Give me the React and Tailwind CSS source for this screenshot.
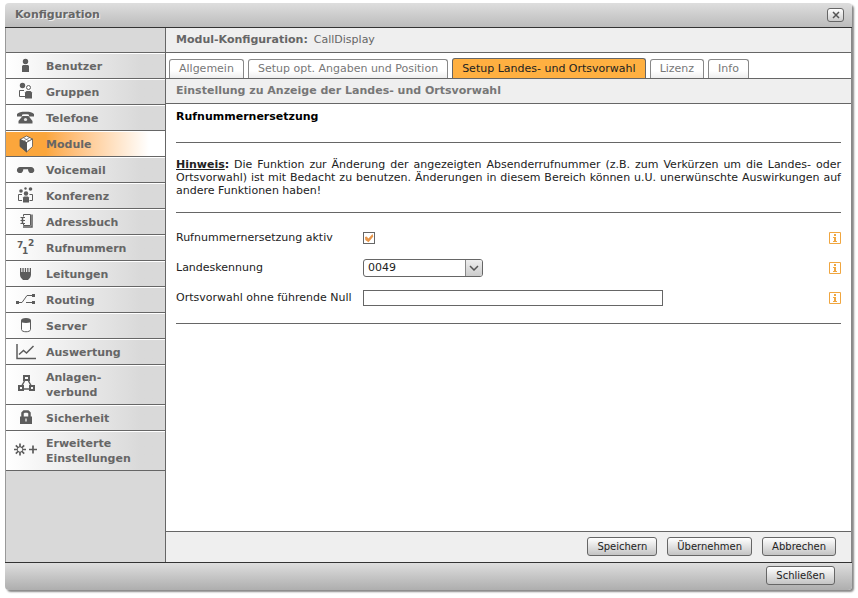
import React, { useState } from 'react';

const ICONS = {
  user: (
    <g fill="currentColor">
      <circle cx="13.5" cy="7.5" r="2.7" />
      <path d="M10 18v-6l1-1h5l1 1v6z" />
    </g>
  ),
  group: (
    <g fill="currentColor">
      <circle cx="10.5" cy="5.5" r="2.7" />
      <circle cx="16.5" cy="7.5" r="2" fill="#fff" stroke="currentColor" />
      <path d="M12 10.5H7.5v6H13" fill="#fff" stroke="currentColor" />
      <path d="M13 18.5v-6l1.500-1.500h4l1.500 1.500v6z" />
    </g>
  ),
  phone: (
    <g fill="currentColor">
      <path d="M5 10.500V8c1.500-1.700 4-2.300 8.500-2.300S20.500 6.300 22 8v2.500h-5V8.800c-2-.6-5-.6-7 0v1.700z" />
      <path d="M10.500 10h6l4 5v2.500h-14V15z" />
      <circle cx="13.500" cy="13.500" r="1.600" fill="#e6e6e6" />
    </g>
  ),
  cube: (
    <g stroke="#555" strokeWidth=".8" strokeLinejoin="round">
      <path d="M8 7.500l6.500-3.500L20.500 7l-6 3.500z" fill="#fff" />
      <path d="M14.500 10.500l6-3.500v7.500l-6 5.500z" fill="#fff" />
      <path d="M8 7.500l6.500 3V20L8 14.500z" fill="#555" />
      <path d="M11.500 5.800l5.500 3M17.500 5.800L11.500 9" strokeWidth=".6" />
    </g>
  ),
  voicemail: (
    <path
      fill="currentColor"
      d="M8 9h11c1.800 0 3.300 1.500 3.300 3.200 0 1.600-1.400 2.900-3.100 2.900-1.900 0-3.200-1.500-3.200-3.900h-4.700c0 2.400-1.300 3.900-3.300 3.900-1.700 0-3.100-1.300-3.100-2.900C4.900 10.500 6.300 9 8 9z"
    />
  ),
  conference: (
    <g fill="currentColor">
      <circle cx="9" cy="7" r="1.800" />
      <circle cx="14" cy="9.500" r="2.200" />
      <circle cx="18.500" cy="5" r="1.800" />
      <circle cx="13.500" cy="4.500" r="1.200" />
      <path d="M10 10.500H6.500v6H10M17.500 10.500h3v6h-3" fill="none" stroke="currentColor" />
      <path d="M11 18.500v-5l1-1h4l1 1v5z" />
    </g>
  ),
  book: (
    <g fill="none" stroke="currentColor">
      <path d="M11.500 6.500v-2h7v11h-7v-1.500" />
      <path d="M11 17h9V4.500" strokeWidth="1.500" />
      <path d="M8.500 7.500H13M8.500 13.500H13M8.500 10.500H13" />
      <path d="M10.500 7v7" strokeWidth="1.500" />
    </g>
  ),
  numbers: (
    <g fill="currentColor" fontFamily="DejaVu Sans" fontWeight="bold" fontSize="9">
      <text x="5" y="12">7</text>
      <text x="10" y="18">1</text>
      <text x="16" y="10">2</text>
    </g>
  ),
  plug: (
    <g fill="currentColor">
      <path d="M8 10h11v2.500c0 2.500-1.500 4-3 5.500h-5c-1.500-1.500-3-3-3-5.500z" />
      <path d="M8 6h1.300v4H8zM10.400 6h1.300v4h-1.300zM12.800 6h1.300v4h-1.300zM15.200 6h1.300v4h-1.300zM17.700 6H19v4h-1.300z" />
    </g>
  ),
  routing: (
    <g fill="currentColor">
      <path d="M6 14.500h4l5-7h6M14 14.500h7" fill="none" stroke="currentColor" />
      <path d="M4 13h3v3H4zM20 6h3v3h-3zM20 13h3v3h-3z" />
    </g>
  ),
  server: (
    <g>
      <path d="M9.500 6.500v9c0 3 9 3 9 0v-9" fill="#fff" stroke="currentColor" />
      <ellipse cx="14" cy="6.500" rx="5" ry="2.500" fill="currentColor" />
    </g>
  ),
  chart: (
    <g fill="none" stroke="currentColor">
      <path d="M5 4v14.500h19" strokeWidth="1.500" />
      <path d="M7 14.500l4.500-4 3 2.500L21.500 6" strokeWidth="1.500" />
    </g>
  ),
  network: (
    <g fill="none" stroke="currentColor" strokeWidth="2">
      <path d="M12 3h5v4h-5zM7 13h4v4H7zM18 13h4v4h-4z" />
      <path d="M12.500 8L10 12.500M16.500 8l2.500 4.500M11 16h7" strokeWidth="1.500" />
    </g>
  ),
  lock: (
    <g>
      <path d="M10.500 11V7l1.500-1.500h4L17.500 7v4" fill="none" stroke="currentColor" strokeWidth="2.500" />
      <path d="M8 10.500h12V18H8z" fill="currentColor" />
      <path d="M13.300 12.500h1.400v3h-1.400z" fill="#e6e6e6" />
    </g>
  ),
  gear: (
    <g fill="none" stroke="currentColor" strokeWidth="1.700">
      <path d="M8 4.500v3.700M8 12.800v3.700M2 10.500h3.700M10.300 10.500H14M3.800 6.300l2.700 2.700M9.500 12l2.700 2.700M12.200 6.300L9.500 9M6.500 12l-2.700 2.700" />
      <circle cx="8" cy="10.500" r="2.800" strokeWidth=".8" />
      <path d="M17 10.500h8M21 6.500v8" />
    </g>
  ),
};

const NAV_ITEMS = [
  { label: ['Benutzer'], icon: 'user' },
  { label: ['Gruppen'], icon: 'group' },
  { label: ['Telefone'], icon: 'phone' },
  { label: ['Module'], icon: 'cube', active: true },
  { label: ['Voicemail'], icon: 'voicemail' },
  { label: ['Konferenz'], icon: 'conference' },
  { label: ['Adressbuch'], icon: 'book' },
  { label: ['Rufnummern'], icon: 'numbers' },
  { label: ['Leitungen'], icon: 'plug' },
  { label: ['Routing'], icon: 'routing' },
  { label: ['Server'], icon: 'server' },
  { label: ['Auswertung'], icon: 'chart' },
  { label: ['Anlagen-', 'verbund'], icon: 'network' },
  { label: ['Sicherheit'], icon: 'lock' },
  { label: ['Erweiterte', 'Einstellungen'], icon: 'gear' },
];

const TABS = ['Allgemein', 'Setup opt. Angaben und Position', 'Setup Landes- und Ortsvorwahl', 'Lizenz', 'Info'];

const NavItem = ({ label, icon, active }) => (
  <li className="border-b border-[#666]">
    <a
      href="#"
      className={`flex items-center border-t border-white pl-[6px] ${
        label.length > 1 ? 'h-[39px]' : 'h-[25px]'
      } ${
        active
          ? 'bg-linear-to-r from-[#fba63c] from-25% to-white to-90%'
          : 'bg-linear-to-r from-white to-[#d9d9d9] to-85%'
      }`}
    >
      <svg viewBox="0 0 28 24" className="h-6 w-7 shrink-0 text-[#5c5c5c]" aria-hidden="true">
        {ICONS[icon]}
      </svg>
      <span className="pl-[6px] font-bold leading-[15px]">
        {label.map((line) => (
          <span key={line} className="block">{line}</span>
        ))}
      </span>
    </a>
  </li>
);

const Button = ({ children }) => (
  <button
    type="button"
    className="h-[19px] rounded-[3px] border border-[#666] bg-linear-to-b from-white to-[#c4c4c4] px-[9px] text-[10px] leading-[17px] text-[#222]"
  >
    {children}
  </button>
);

const InfoButton = ({ topic }) => (
  <button type="button" aria-label={`Info: ${topic}`} className="ml-auto size-3 text-[#f0a640]">
    <svg viewBox="0 0 12 12" className="size-3">
      <path d="M.5.5h11v11H.5z" fill="none" stroke="currentColor" />
      <path d="M5 2h2v2H5zM4 5h3v4h1v1H4V9h1V6H4z" fill="currentColor" />
    </svg>
  </button>
);

const Row = ({ id, label, children }) => (
  <div className="flex h-[30px] items-center pb-px">
    <label htmlFor={id} className="w-[187px] shrink-0 pt-px">{label}</label>
    {children}
    <InfoButton topic={label} />
  </div>
);

export default function App() {
  const [active, setActive] = useState(true);
  const [areaCode, setAreaCode] = useState('');

  return (
    <div className="flex min-h-screen bg-white pt-[3px] pr-[6px] pb-2 pl-[5px] font-['DejaVu_Sans',Verdana,sans-serif] text-[11px] text-[#666]">
      <div className="flex grow flex-col overflow-hidden rounded-[4px] shadow-[2px_2px_2px_#888]">
        <header className="flex h-[25px] shrink-0 items-center justify-between border-b border-[#333] bg-linear-to-b from-[#dedede] to-[#bcbcbc] pr-2 pl-[10px]">
          <h1 className="pt-px font-bold [text-shadow:1px_1px_0_#eee]">Konfiguration</h1>
          <button
            type="button"
            aria-label="Fenster schließen"
            className="flex h-[14px] w-[17px] items-center justify-center rounded-[3px] border border-[#666] bg-linear-to-b from-white to-[#ccc]"
          >
            <svg viewBox="0 0 8 8" className="size-2" stroke="#555" strokeWidth="1.5">
              <path d="M1 1l6 6M7 1L1 7" />
            </svg>
          </button>
        </header>

        <div className="flex grow">
          <nav className="w-[161px] shrink-0 border-r border-l border-r-[#666] border-l-[#999] bg-[#d9d9d9]">
            <div className="h-[25px] border-b border-[#666]"></div>
            <ul>
              {NAV_ITEMS.map((item) => (
                <NavItem key={item.icon} {...item} />
              ))}
            </ul>
          </nav>

          <main className="flex min-w-0 grow flex-col border-r border-[#888] bg-white">
            <div className="flex h-[25px] items-center gap-[6px] border-b border-[#666] bg-[#efefef] px-[10px]">
              <strong>Modul-Konfiguration:</strong>
              <span>CallDisplay</span>
            </div>

            <div className="flex h-[26px] items-end gap-1 border-b border-[#666] pl-[3px]">
              {TABS.map((tab, i) => (
                <button
                  key={tab}
                  type="button"
                  className={`rounded-t-[3px] border border-b-0 px-[9px] pt-px ${
                    i === 2
                      ? 'h-5 border-[#666] bg-[#ffb041] text-[#222]'
                      : 'h-[19px] border-[#888] bg-linear-to-b from-white from-60% to-[#eee] text-[#777]'
                  }`}
                >
                  {tab}
                </button>
              ))}
            </div>

            <h2 className="h-[25px] border-b border-[#666] bg-[#efefef] px-[10px] font-bold leading-6 text-[#777]">
              Einstellung zu Anzeige der Landes- und Ortsvorwahl
            </h2>

            <form className="grow px-[10px] text-[#222]" onSubmit={(e) => e.preventDefault()}>
              <h3 className="font-bold leading-[25px] text-black">Rufnummernersetzung</h3>
              <hr className="mt-[13px] border-[#666]" />
              <p className="my-[15px] text-justify leading-[13px]">
                <strong className="underline">Hinweis</strong>
                <strong>:</strong> Die Funktion zur Änderung der angezeigten Absenderrufnummer (z.B. zum Verkürzen um
                die Landes- oder Ortsvorwahl) ist mit Bedacht zu benutzen. Änderungen in diesem Bereich können u.U.
                unerwünschte Auswirkungen auf andere Funktionen haben!
              </p>
              <hr className="border-[#666]" />
              <div className="py-[10px]">
                <Row id="replace" label="Rufnummernersetzung aktiv">
                  <span className="relative size-3">
                    <input
                      id="replace"
                      type="checkbox"
                      checked={active}
                      onChange={(e) => setActive(e.target.checked)}
                      className="block size-3 appearance-none border border-[#666] bg-white"
                    />
                    {active && (
                      <svg viewBox="0 0 12 12" className="pointer-events-none absolute inset-0 size-3">
                        <path d="M2 5l1.500-.5L5.500 6.500 9.500 2l.8 2.500L5.500 10.300 2.300 8z" fill="#e8964a" />
                      </svg>
                    )}
                  </span>
                </Row>
                <Row id="country" label="Landeskennung">
                  <span className="relative">
                    <select
                      id="country"
                      className="block h-[18px] w-[120px] appearance-none rounded-[3px] border border-[#666] bg-white pl-1 leading-4"
                    >
                      <option>0049</option>
                    </select>
                    <span className="pointer-events-none absolute inset-y-px right-px flex w-[17px] items-center justify-center rounded-r-[2px] border-l border-[#888] bg-linear-to-b from-[#eee] to-[#ccc]">
                      <svg viewBox="0 0 10 6" className="h-[6px] w-[10px]" fill="none" stroke="#555" strokeWidth="1.500">
                        <path d="M1 1l4 4 4-4" />
                      </svg>
                    </span>
                  </span>
                </Row>
                <Row id="area" label="Ortsvorwahl ohne führende Null">
                  <input
                    id="area"
                    type="text"
                    value={areaCode}
                    onChange={(e) => setAreaCode(e.target.value)}
                    className="h-4 w-[300px] border border-[#666] bg-white px-1"
                  />
                </Row>
              </div>
              <hr className="border-[#666]" />
            </form>

            <div className="flex h-[31px] shrink-0 items-center justify-end gap-[10px] border-t border-[#666] bg-[#efefef] pr-[15px] pb-px">
              <Button>Speichern</Button>
              <Button>Übernehmen</Button>
              <Button>Abbrechen</Button>
            </div>
          </main>
        </div>

        <footer className="flex h-7 shrink-0 items-center justify-end border-t border-[#333] bg-linear-to-b from-[#dedede] to-[#aeaeae] pr-[17px] pb-[2px]">
          <Button>Schließen</Button>
        </footer>
      </div>
    </div>
  );
}
